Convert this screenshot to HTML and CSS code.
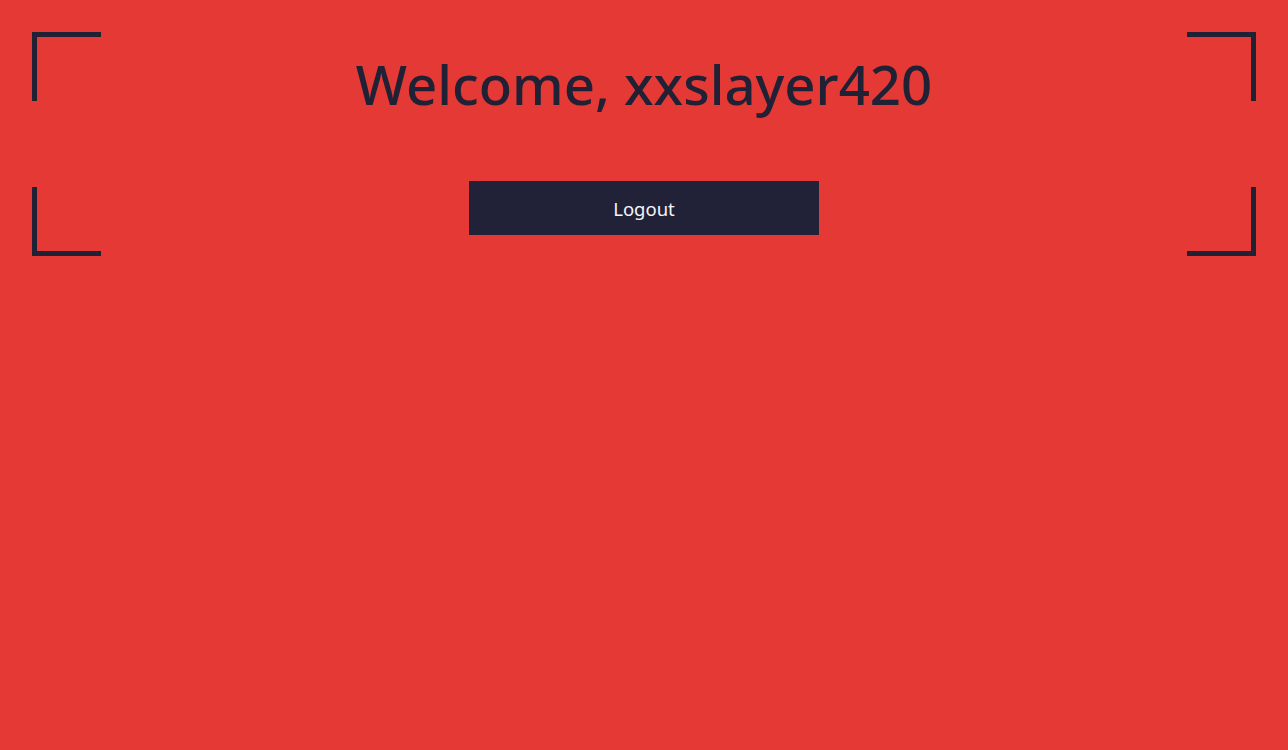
FILE: index.html
```html
<!DOCTYPE html>
<html lang="en">
<head>
<meta charset="utf-8">
<title>Welcome</title>
<link rel="stylesheet" href="styles.css">
</head>
<body>
<main class="frame">
  <span class="corner corner-tl"></span>
  <span class="corner corner-tr"></span>
  <span class="corner corner-bl"></span>
  <span class="corner corner-br"></span>
  <h1 class="title">Welcome, xxslayer420</h1>
  <button class="logout" type="button">Logout</button>
</main>
</body>
</html>
```
FILE: styles.css
```css
html, body {
  margin: 0;
  padding: 0;
}
body {
  background: #e53935;
  font-family: "Noto Sans", "Open Sans", sans-serif;
  color: #212135;
  min-height: 750px;
}
.frame {
  position: relative;
  margin: 32px;
  height: 224px;
  display: flex;
  flex-direction: column;
  align-items: center;
  box-sizing: border-box;
  padding-top: 19px;
}
.corner {
  position: absolute;
  width: 69px;
  height: 69px;
  box-sizing: border-box;
  border: 0 solid #212135;
}
.corner-tl { top: 0; left: 0; border-top-width: 5px; border-left-width: 5px; }
.corner-tr { top: 0; right: 0; border-top-width: 5px; border-right-width: 5px; }
.corner-bl { bottom: 0; left: 0; border-bottom-width: 5px; border-left-width: 5px; }
.corner-br { bottom: 0; right: 0; border-bottom-width: 5px; border-right-width: 5px; }
.title {
  margin: 0;
  font-size: 54.5px;
  line-height: 67px;
  font-weight: 500;
  color: #212135;
}
.logout {
  margin-top: 63px;
  width: 350px;
  height: 54px;
  border: 0;
  background: #212137;
  color: #f5f5f8;
  font-family: "Noto Sans", "Open Sans", sans-serif;
  font-size: 18.5px;
  cursor: pointer;
}
```
